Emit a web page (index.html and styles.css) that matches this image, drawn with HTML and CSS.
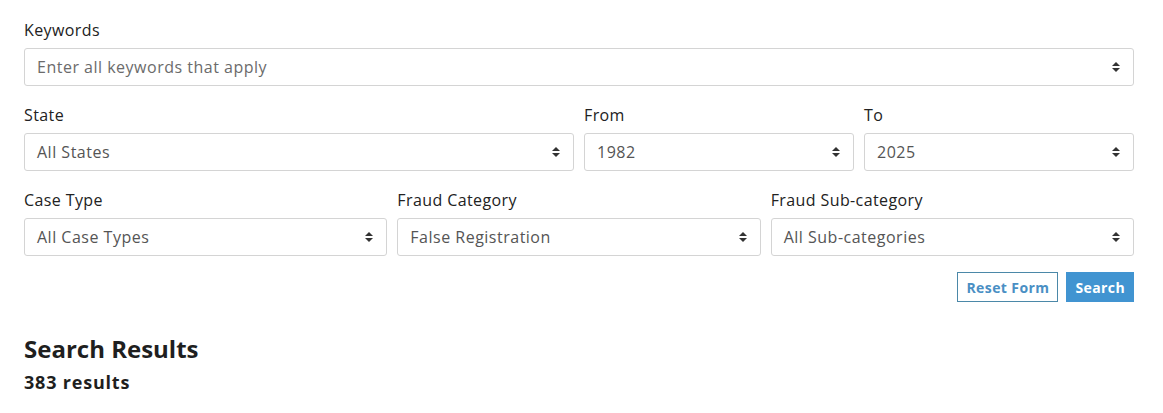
FILE: index.html
```html
<!DOCTYPE html>
<html>
<head>
<meta charset="utf-8">
<link rel="stylesheet" href="styles.css">
</head>
<body>
<div class="container">
  <form class="search-form">
    <div class="field">
      <label class="label">Keywords</label>
      <div class="select placeholder">Enter all keywords that apply<span class="arrows"></span></div>
    </div>
    <div class="row row-2">
      <div class="field">
        <label class="label">State</label>
        <div class="select">All States<span class="arrows"></span></div>
      </div>
      <div class="field">
        <label class="label">From</label>
        <div class="select">1982<span class="arrows"></span></div>
      </div>
      <div class="field">
        <label class="label">To</label>
        <div class="select">2025<span class="arrows"></span></div>
      </div>
    </div>
    <div class="row row-3">
      <div class="field">
        <label class="label">Case Type</label>
        <div class="select">All Case Types<span class="arrows"></span></div>
      </div>
      <div class="field">
        <label class="label">Fraud Category</label>
        <div class="select">False Registration<span class="arrows"></span></div>
      </div>
      <div class="field">
        <label class="label">Fraud Sub-category</label>
        <div class="select">All Sub-categories<span class="arrows"></span></div>
      </div>
    </div>
    <div class="actions">
      <button type="button" class="btn btn-outline">Reset Form</button>
      <button type="button" class="btn btn-primary">Search</button>
    </div>
  </form>
  <h2 class="results-title">Search Results</h2>
  <div class="results-count">383 results</div>
</div>
</body>
</html>
```
FILE: styles.css
```css
* { box-sizing: border-box; }
body {
  margin: 0;
  background: #fff;
  font-family: "Open Sans", "Noto Sans", sans-serif;
  color: #222;
}
.container {
  width: 1110px;
  margin-left: 24px;
  padding-top: 20px;
}
.field {
  display: flex;
  flex-direction: column;
}
.label {
  font-size: 16px;
  line-height: 20px;
  letter-spacing: 0.4px;
  color: #222;
  margin-bottom: 8px;
}
.select {
  position: relative;
  height: 38px;
  border: 1px solid #d4d4d4;
  border-radius: 3px;
  padding: 0 30px 0 12px;
  display: flex;
  align-items: center;
  font-size: 16px;
  letter-spacing: 0.5px;
  color: #555;
  background: #fff;
}
.placeholder { color: #6b6b6b; }
.arrows {
  position: absolute;
  right: 13px;
  top: 50%;
  width: 8px;
  height: 10px;
  margin-top: -5px;
}
.arrows::before, .arrows::after {
  content: "";
  position: absolute;
  left: 0;
  border-left: 4px solid transparent;
  border-right: 4px solid transparent;
}
.arrows::before { top: 0; border-bottom: 4px solid #333; }
.arrows::after { bottom: 0; border-top: 4px solid #333; }
.row {
  display: grid;
  column-gap: 10px;
  margin-top: 19px;
}
.row-2 { grid-template-columns: 550px 1fr 1fr; }
.row-3 { grid-template-columns: 1fr 1fr 1fr; }
.actions {
  display: flex;
  justify-content: flex-end;
  gap: 8px;
  margin-top: 16px;
}
.btn {
  height: 30px;
  font-family: inherit;
  font-size: 14px;
  font-weight: 700;
  letter-spacing: 0.4px;
  padding: 0 8px;
  border-radius: 0;
  cursor: pointer;
}
.btn-outline {
  background: #fff;
  color: #4a8fc4;
  border: 1px solid #4b88a8;
}
.btn-primary {
  background: #4194d1;
  color: #fff;
  border: 1px solid #4194d1;
}
.results-title {
  margin: 31px 0 0;
  font-size: 24px;
  line-height: 32px;
  font-weight: 700;
  color: #1f1f1f;
}
.results-count {
  margin-top: 5px;
  font-size: 18px;
  letter-spacing: 0.8px;
  font-weight: 700;
  color: #1f1f1f;
}
```
